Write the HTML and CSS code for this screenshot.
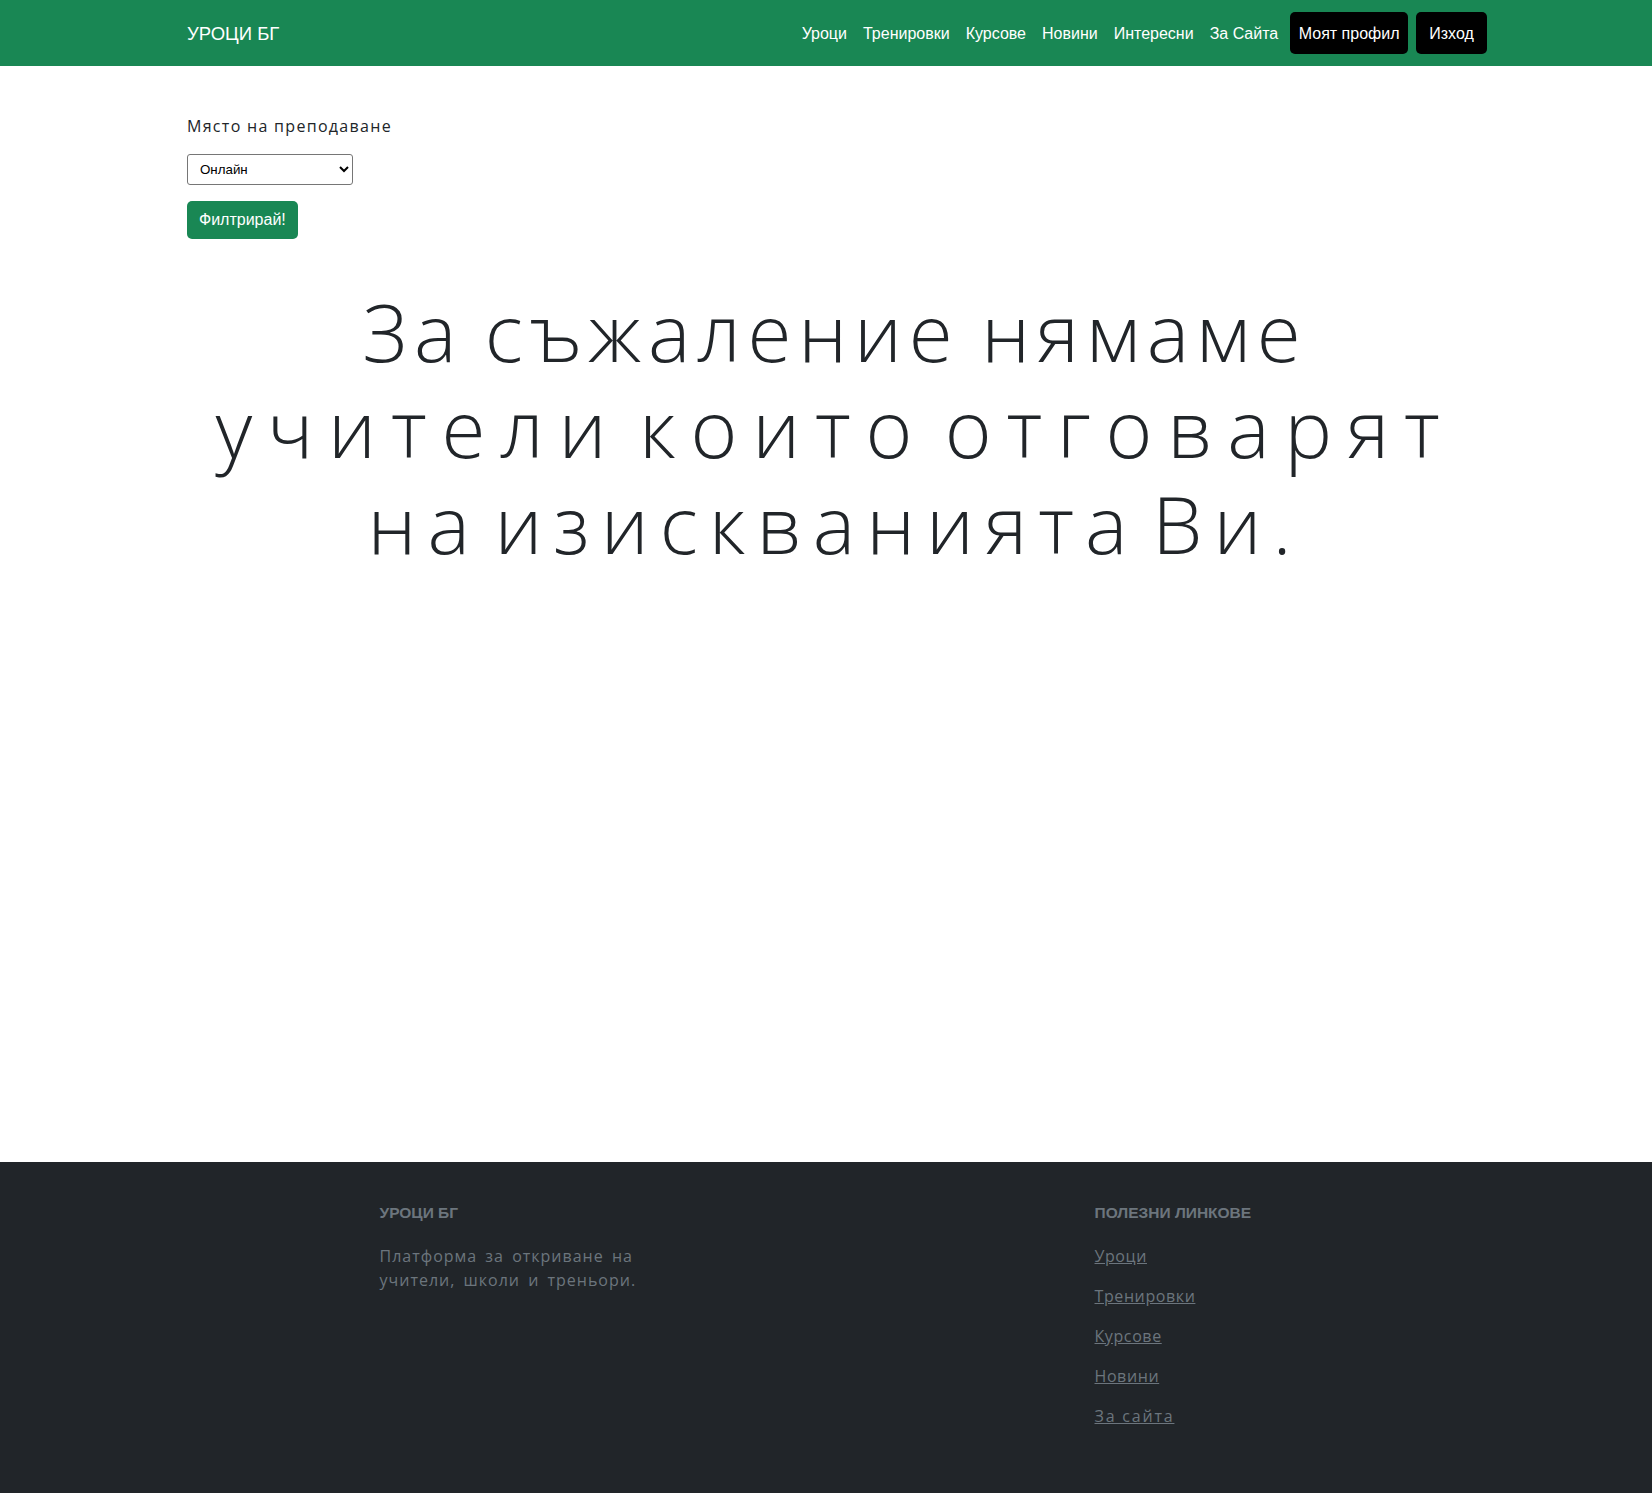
FILE: index.html
```html
<!DOCTYPE html>
<html lang="bg">
<head>
<meta charset="utf-8">
<title>Уроци БГ</title>
<link rel="stylesheet" href="styles.css">
</head>
<body>
<nav class="navbar">
  <div class="nav-inner">
    <a class="brand" href="#">УРОЦИ БГ</a>
    <ul class="nav-links">
      <li><a href="#">Уроци</a></li>
      <li><a href="#">Тренировки</a></li>
      <li><a href="#">Курсове</a></li>
      <li><a href="#">Новини</a></li>
      <li><a href="#">Интересни</a></li>
      <li><a href="#">За Сайта</a></li>
    </ul>
    <div class="nav-btns">
      <a class="btn-black" href="#">Моят профил</a>
      <a class="btn-black" href="#">Изход</a>
    </div>
  </div>
</nav>

<main class="main">
  <div class="container">
    <form class="filter">
      <label class="filter-label" for="place">Място на преподаване</label>
      <select class="filter-select" id="place">
        <option>Онлайн</option>
      </select>
      <button class="btn-green" type="button">Филтрирай!</button>
    </form>
    <h1 class="notice">
      <span class="line line-1">За съжаление нямаме</span>
      <span class="line line-2">учители които отговарят</span>
      <span class="line line-3">на изискванията Ви.</span>
    </h1>
  </div>
</main>

<footer class="footer">
  <div class="container footer-row">
    <div class="footer-col footer-about">
      <h6 class="footer-title">УРОЦИ БГ</h6>
      <p class="footer-text">Платформа за откриване на учители, школи и треньори.</p>
    </div>
    <div class="footer-col footer-links">
      <h6 class="footer-title">ПОЛЕЗНИ ЛИНКОВЕ</h6>
      <p><a href="#">Уроци</a></p>
      <p><a href="#">Тренировки</a></p>
      <p><a href="#">Курсове</a></p>
      <p><a href="#">Новини</a></p>
      <p><a class="wide" href="#">За сайта</a></p>
    </div>
  </div>
</footer>
</body>
</html>
```

FILE: styles.css
```css
* { box-sizing: border-box; }

body {
  margin: 0;
  font-family: "Open Sans", "Noto Sans", sans-serif;
  color: #212529;
  background: #fff;
}

a { text-decoration: none; }

.navbar {
  background: #198754;
  height: 66px;
}

.nav-inner {
  width: 1300px;
  margin-left: 187px;
  height: 66px;
  display: flex;
  align-items: center;
}

.brand {
  font-family: "Liberation Sans", Arial, sans-serif;
  font-size: 18.5px;
  color: #fff;
  margin-right: auto;
  padding-top: 1px;
}

.nav-links {
  list-style: none;
  margin: 0;
  padding: 0;
  display: flex;
}

.nav-links a {
  display: block;
  padding: 9px 8px 7px;
  font-family: "Liberation Sans", Arial, sans-serif;
  font-size: 16px;
  color: #fff;
}

.nav-btns {
  display: flex;
  gap: 8px;
  margin-left: 4px;
}

.btn-black {
  display: flex;
  align-items: center;
  justify-content: center;
  height: 42px;
  min-width: 71px;
  padding: 1px 8.5px 0;
  background: #000;
  color: #fff;
  border-radius: 5px;
  font-family: "Liberation Sans", Arial, sans-serif;
  font-size: 16px;
}

.main {
  min-height: 1096px;
}

.container {
  width: 1320px;
  padding: 0 12px;
  margin-left: 175px;
}

.filter {
  padding-top: 48px;
  display: flex;
  flex-direction: column;
  align-items: flex-start;
}

.filter-label {
  font-size: 16px;
  line-height: 24px;
  letter-spacing: 1.3px;
  margin-bottom: 16px;
}

.filter-select {
  width: 166px;
  height: 31px;
  font-family: "Liberation Sans", Arial, sans-serif;
  font-size: 13.33px;
  color: #000;
  padding: 0 8px;
  border: 1px solid #767676;
  border-radius: 3px;
  background: #fff;
  margin-bottom: 16px;
}

.btn-green {
  height: 38px;
  padding: 0 12px;
  border: none;
  border-radius: 5px;
  background: #198754;
  color: #fff;
  font-family: "Liberation Sans", Arial, sans-serif;
  font-size: 16px;
}

.notice {
  margin: 44px 0 0;
  font-size: 80px;
  font-weight: 300;
  line-height: 96px;
  text-align: center;
}

.line { display: block; }

.line-1 {
  letter-spacing: 6.8px;
  word-spacing: -6px;
}

.line-2 {
  letter-spacing: 14.8px;
  word-spacing: -18px;
}

.line-3 {
  letter-spacing: 11px;
  word-spacing: -18px;
}

.footer {
  background: #212529;
  padding: 41px 0 60px;
}

.footer-row {
  display: flex;
  padding: 0;
}

.footer-col {
  padding: 0 12px;
  margin: 0 auto;
}

.footer-about { width: 330px; }
.footer-links { width: 220px; }

.footer-title {
  margin: 0 0 22px;
  font-family: "Liberation Sans", Arial, sans-serif;
  font-weight: 700;
  font-size: 15.5px;
  line-height: 19px;
  color: #6c757d;
}

.footer-col p {
  margin: 0 0 16px;
  font-size: 16px;
  line-height: 24px;
  letter-spacing: 0.6px;
  color: #6c757d;
}

.footer-col .footer-text {
  max-width: 290px;
  letter-spacing: 1px;
  word-spacing: 3px;
}

.footer-col a {
  color: #6c757d;
  text-decoration: underline;
}

.footer-col a.wide {
  letter-spacing: 1.8px;
  word-spacing: 0;
}
```
